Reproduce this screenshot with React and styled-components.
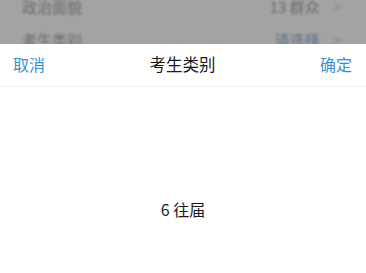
import React from 'react';
import styled, { createGlobalStyle } from 'styled-components';

const GlobalStyle = createGlobalStyle`
  html, body {
    margin: 0;
    padding: 0;
    background: #ffffff;
    overflow: hidden;
  }
  body {
    font-family: "Noto Sans CJK SC", "Noto Sans", "Liberation Sans", sans-serif;
  }
`;

const Page = styled.div`
  width: 366px;
  height: 273px;
  display: flex;
  flex-direction: column;
  overflow: hidden;
`;

const Backdrop = styled.div`
  height: 44px;
  flex-shrink: 0;
  overflow: hidden;
  background: #a3a3a3;
`;

const BackList = styled.div`
  margin-top: -10px;
  filter: blur(0.8px);
`;

const BackRow = styled.div`
  height: 33px;
  display: flex;
  align-items: center;
  justify-content: space-between;
  padding: 0 24px 0 22px;
  font-size: 15px;
  color: #6c6c6c;
`;

const BackValue = styled.span`
  display: flex;
  align-items: center;
  gap: 14px;
  color: ${props => (props.$placeholder ? '#5b6f8a' : '#6c6c6c')};
`;

const Arrow = styled.span`
  color: #8a8a8a;
  font-size: 15px;
`;

const Sheet = styled.div`
  flex: 1;
  background: #ffffff;
  display: flex;
  flex-direction: column;
`;

const Toolbar = styled.div`
  height: 39px;
  display: flex;
  align-items: center;
  justify-content: space-between;
  padding: 0 14px 3px 13px;
  border-bottom: 1px solid #f0f0f0;
  font-size: 16px;
`;

const ActionButton = styled.button`
  border: none;
  background: transparent;
  padding: 0;
  font: inherit;
  color: #3b8fd1;
`;

const Title = styled.span`
  color: #1a1a1a;
  font-size: 16.5px;
`;

const Picker = styled.div`
  flex: 1;
  display: flex;
  justify-content: center;
  padding-top: 110px;
  font-size: 16px;
  color: #1a1a1a;
`;

const App = () => {
  return (
    <Page>
      <GlobalStyle />
      <Backdrop>
        <BackList>
          <BackRow>
            <span>政治面貌</span>
            <BackValue>
              13 群众 <Arrow>&gt;</Arrow>
            </BackValue>
          </BackRow>
          <BackRow>
            <span>考生类别</span>
            <BackValue $placeholder>
              请选择 <Arrow>&gt;</Arrow>
            </BackValue>
          </BackRow>
        </BackList>
      </Backdrop>
      <Sheet>
        <Toolbar>
          <ActionButton>取消</ActionButton>
          <Title>考生类别</Title>
          <ActionButton>确定</ActionButton>
        </Toolbar>
        <Picker>6 往届</Picker>
      </Sheet>
    </Page>
  );
};

export default App;
